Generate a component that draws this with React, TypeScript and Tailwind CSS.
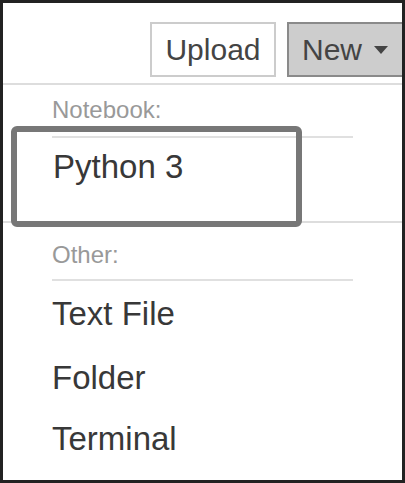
export default function App() {
  return (
    <div className="relative w-[405px] h-[483px] overflow-hidden border-[3px] border-[#222] bg-white font-['Liberation_Sans',Arial,Helvetica,sans-serif] text-[#383838]">
      {/* toolbar */}
      <div className="flex pt-[19px] pl-[147px] gap-[11px]">
        <button className="flex h-[55px] w-[126px] shrink-0 items-center justify-center border-2 border-[#ccc] bg-white font-['Liberation_Sans',Arial,sans-serif] text-[30px] text-[#444]">
          Upload
        </button>
        <button className="flex h-[55px] w-[122px] shrink-0 items-center border-2 border-[#8a8a8a] bg-[#cdcdcd] pl-[13px] font-['Liberation_Sans',Arial,sans-serif] text-[30px] text-[#444]">
          New
          <svg width="14" height="8" viewBox="0 0 14 8" className="ml-[12px]">
            <path d="M0 0 L14 0 L7 8 Z" fill="#444" />
          </svg>
        </button>
      </div>
      <div className="mt-[6px] h-[2px] bg-[#ddd]" />

      {/* dropdown */}
      <div className="pl-[49px]">
        <div className="mt-[13px] text-[24px] leading-[24px] text-[#999]">Notebook:</div>
        <div className="mt-[14px] h-[2px] w-[301px] bg-[#e0e0e0]" />
        <div className="mt-[12px] pl-[1px] text-[33px] leading-[33px]">Python 3</div>
      </div>
      <div className="mt-[38px] h-[2px] bg-[#ddd]" />
      <div className="pl-[49px]">
        <div className="mt-[20px] text-[24px] leading-[24px] text-[#999]">Other:</div>
        <div className="mt-[12px] h-[2px] w-[301px] bg-[#e0e0e0]" />
        <div className="mt-[16px] text-[33px] leading-[33px]">Text File</div>
        <div className="mt-[31px] text-[33px] leading-[33px]">Folder</div>
        <div className="mt-[28px] text-[33px] leading-[33px]">Terminal</div>
      </div>

      {/* highlight */}
      <div className="absolute left-[8px] top-[123px] h-[101px] w-[291px] rounded-[6px] border-[6px] border-[#777]" />
    </div>
  );
}
